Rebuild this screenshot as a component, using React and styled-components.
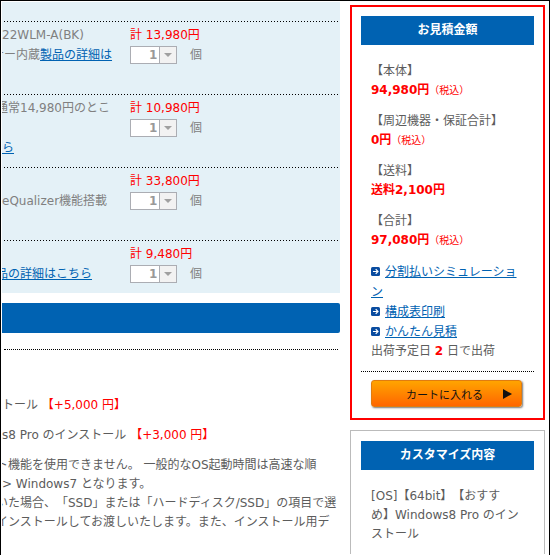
import React from 'react'
import styled, { createGlobalStyle } from 'styled-components'

const items = [
  { lines: [{ text: '22WLM-A(BK)' }, { text: 'ナー内蔵', link: '製品の詳細は', cut: 'most' }], price: '13,980円' },
  { lines: [{ text: '通常14,980円のとこ', cut: 'half' }, {}, { link: 'ら' }], price: '10,980円' },
  { lines: [{}, { text: 'eQualizer機能搭載' }], price: '33,800円' },
  { lines: [{}, { link: '品の詳細はこちら', cut: 'half' }], price: '9,480円' },
]

const prices = [
  { label: '【本体】', value: '94,980円', tax: true },
  { label: '【周辺機器・保証合計】', value: '0円', tax: true },
  { label: '【送料】', value: '送料2,100円' },
  { label: '【合計】', value: '97,080円', tax: true },
]

const links = ['分割払いシミュレーション', '構成表印刷', 'かんたん見積']

const LinkIcon = () => (
  <Icon viewBox="0 0 9 9" aria-hidden="true">
    <rect width="9" height="9" rx="1.5" fill="#0a4ca0" />
    <path d="M2 4.5h5M4.7 2.2L7 4.5 4.7 6.8" fill="none" stroke="#fff" strokeWidth="1.2" />
  </Icon>
)

const ItemRow = ({ item, index }) => (
  <tr>
    <td>
      {item.lines.map((line, i) => (
        <Line key={i} $cut={line.cut}>
          {line.text}
          {line.link && <Link href="#">{line.link}</Link>}
        </Line>
      ))}
    </td>
    <PriceCell>
      <Red>計 {item.price}</Red>
      <Quantity>
        <SelectBox>
          <select id={`qty-${index}`} disabled defaultValue="1">
            <option value="1">1</option>
          </select>
          <Arrow>
            <svg width="8" height="4" viewBox="0 0 8 4"><path d="M0 0h8L4 4z" fill="#a0a0a0" /></svg>
          </Arrow>
        </SelectBox>
        <label htmlFor={`qty-${index}`}>個</label>
      </Quantity>
    </PriceCell>
  </tr>
)

const App = () => {
  return (
    <Page>
      <GlobalStyle />
      <Main>
        <ItemPanel>
          <table>
            <tbody>
              {items.map((item, i) => <ItemRow key={i} item={item} index={i} />)}
            </tbody>
          </table>
        </ItemPanel>
        <Bar />
        <MainRule />
        <Options>
          <p><Line as="span">トール <Red>【+5,000 円】</Red></Line></p>
          <p><Line as="span">s8 Pro のインストール <Red>【+3,000 円】</Red></Line></p>
          <div>
            <Line $cut="half">ト機能を使用できません。 一般的なOS起動時間は高速な順</Line>
            <Line>&gt; Windows7 となります。</Line>
            <Line $cut="half">いた場合、「SSD」または「ハードディスク/SSD」の項目で選</Line>
            <Line $cut="half">インストールしてお渡しいたします。また、インストール用デ</Line>
          </div>
        </Options>
      </Main>
      <Side>
        <Estimate>
          <Heading>お見積金額</Heading>
          <Body>
            {prices.map((p) => (
              <Price key={p.label}>
                <dt>{p.label}</dt>
                <dd><b>{p.value}</b>{p.tax && <small>（税込）</small>}</dd>
              </Price>
            ))}
            <LinkList>
              {links.map((text) => (
                <li key={text}><LinkIcon /><Link href="#">{text}</Link></li>
              ))}
            </LinkList>
            <div>出荷予定日 <Red as="b">2</Red> 日で出荷</div>
          </Body>
          <SideRule />
          <CartButton type="button">
            <span>カートに入れる</span>
            <svg width="9" height="10" viewBox="0 0 9 10" aria-hidden="true"><path d="M0 0l9 5-9 5z" fill="#111" /></svg>
          </CartButton>
        </Estimate>
        <Custom>
          <Heading>カスタマイズ内容</Heading>
          <Body>[OS]【64bit】【おすすめ】Windows8 Pro のインストール</Body>
        </Custom>
      </Side>
    </Page>
  )
}

const GlobalStyle = createGlobalStyle`
  *{
    box-sizing: border-box;
  }
  body{
    margin: 0;
    background-color: #fff;
    color: #5c5c5c;
    font-family: "DejaVu Sans", "Noto Sans CJK JP", sans-serif;
    font-size: 12px;
    line-height: 19px;
    text-spacing-trim: space-all;
  }
  p, dl, dd, h2{
    margin: 0;
  }
`;

const Page = styled.div`
  display: flex;
  gap: 10px;
  min-height: 100vh;
  padding: 1px 4px 1px 1px;
  border: 1px solid #000;
`;

const Main = styled.main`
  flex: 1;
  min-width: 0;
  overflow: hidden;
`;

const ItemPanel = styled.section`
  padding: 19px 2px 0;
  background-color: #e4f1f7;
  color: #808080;
  line-height: 20px;
  table{
    width: 100%;
    table-layout: fixed;
    border-collapse: collapse;
  }
  tr{
    height: 73px;
    background: repeating-linear-gradient(90deg, #000 0 1px, transparent 1px 3px) top left / 100% 1px no-repeat;
  }
  tr:last-child{
    height: 53px;
  }
  td{
    padding: 4px 0 0;
    vertical-align: top;
  }
  td:first-child > div{
    min-height: 20px;
    margin-left: -2px;
  }
`;

const PriceCell = styled.td`
  width: 208px;
`;

const indents = { half: '-6px', most: '-10px' }

/* lines that begin in the middle of a character are pulled back by that part of it */
const Line = styled.div`
  display: block;
  white-space: nowrap;
  text-indent: ${(props) => indents[props.$cut] || '0'};
`;

const Red = styled.span`
  color: #f00;
`;

const Link = styled.a`
  color: #0062b2;
  text-decoration: underline;
`;

const Quantity = styled.div`
  display: flex;
  align-items: center;
  gap: 13px;
  height: 18px;
  margin-top: 1px;
`;

const SelectBox = styled.div`
  position: relative;
  width: 47px;
  height: 18px;
  select{
    appearance: none;
    display: block;
    width: 100%;
    height: 100%;
    margin: 0;
    padding: 0 0 0 18px;
    border: 1px solid #abadb3;
    border-radius: 0;
    background-color: #fff;
    color: #999;
    font: bold 12px "DejaVu Sans", sans-serif;
    opacity: 1;
  }
`;

const Arrow = styled.span`
  position: absolute;
  top: 0;
  right: 0;
  bottom: 0;
  display: flex;
  justify-content: center;
  align-items: center;
  width: 18px;
  border: 1px solid #abadb3;
  background-color: #f2f2f2;
  pointer-events: none;
`;

const Bar = styled.div`
  height: 30px;
  margin-top: 10px;
  border-radius: 0 2px 2px 0;
  background-color: #0062b2;
`;

const MainRule = styled.hr`
  margin: 16px 2px 0;
  border: 0;
  border-top: 1px dotted #000;
`;

const Options = styled.section`
  display: flex;
  flex-direction: column;
  gap: 11px;
  padding-top: 46px;
`;

const Side = styled.aside`
  display: flex;
  flex-direction: column;
  gap: 10px;
  width: 195px;
  padding-top: 3px;
`;

const Estimate = styled.section`
  padding: 9px 9px 11px;
  border: 2px solid #f00;
`;

const Custom = styled.section`
  flex: 1;
  padding: 10px;
  border: 1px solid #bbb;
  border-bottom: 0;
`;

const Heading = styled.h2`
  padding: 5px 0;
  background-color: #0062b2;
  color: #fff;
  font-size: 12px;
  font-weight: bold;
  text-align: center;
`;

const Body = styled.div`
  padding: 17px 10px 0;
`;

const Price = styled.dl`
  margin-bottom: 12px;
  dd{
    color: #f00;
  }
  small{
    font-size: 10px;
  }
`;

const LinkList = styled.ul`
  margin: 0;
  padding: 0;
  list-style: none;
  line-height: 20px;
`;

const Icon = styled.svg`
  width: 9px;
  height: 9px;
  margin-right: 5px;
`;

const SideRule = styled.hr`
  margin: 10px 0 8px;
  border: 0;
  border-top: 1px dotted #000;
`;

const CartButton = styled.button`
  display: flex;
  justify-content: space-between;
  align-items: center;
  width: 151px;
  height: 27px;
  margin: 0 10px;
  padding: 0 9px 0 34px;
  border: 1px solid #e07c10;
  border-radius: 3px;
  background: linear-gradient(#ffa400, #ff6600);
  box-shadow: 1px 1px 2px #777;
  color: #111;
  font-family: inherit;
  font-size: 11px;
  cursor: pointer;
`;

export default App
